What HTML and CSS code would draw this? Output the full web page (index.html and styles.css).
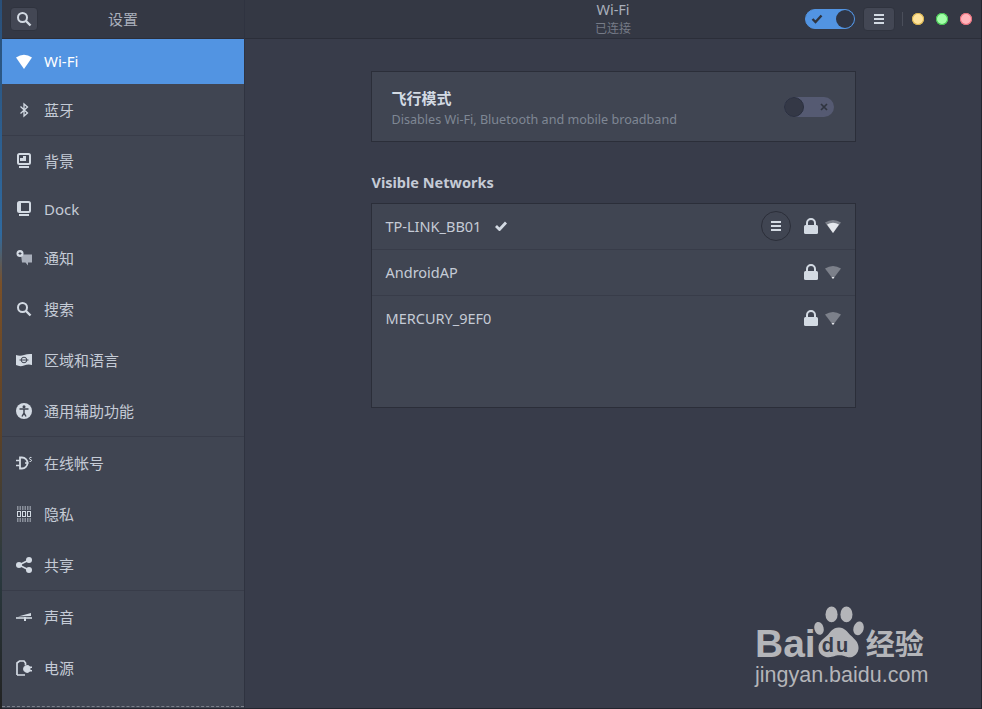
FILE: index.html
```html
<!DOCTYPE html>
<html lang="zh">
<head>
    <meta charset="UTF-8">
    <title>设置 - Wi-Fi</title>
    <link rel="stylesheet" href="styles.css">
</head>
<body>
    <div class="wallpaper"></div>
    <div class="window">
        <aside class="sidebar">
            <header class="side-head">
                <button class="head-btn">
                    <svg width="16" height="16" viewBox="0 0 16 16"><circle cx="6.5" cy="6.5" r="4.5" fill="none" stroke="#d3dae3" stroke-width="2"/><path d="M10 10l4.5 4.500" stroke="#d3dae3" stroke-width="2.400"/></svg>
                </button>
                <span class="side-title">设置</span>
            </header>
            <nav class="menu">
                <div class="menu-group">
                    <div class="row row-wifi active">
                        <svg class="icon" viewBox="0 0 16 16"><path d="M0 3.500Q8-2 16 3.500L8 15Z" fill="#fff"/></svg>
                        <span>Wi-Fi</span>
                    </div>
                    <div class="row">
                        <svg class="icon" viewBox="0 0 16 16"><path d="M4.500 4.500l7 6.500L8 14V2l3.500 3-7 6.500" fill="none" stroke="#d3dae3" stroke-width="1.300"/></svg>
                        <span>蓝牙</span>
                    </div>
                </div>
                <div class="menu-group">
                    <div class="row row-first">
                        <svg class="icon" viewBox="0 0 16 16"><rect x="2" y="1" width="12" height="10" rx="1.500" fill="none" stroke="#d3dae3" stroke-width="2"/><path d="M4 8V5h3V3h3v5z" fill="#d3dae3"/><rect x="3" y="13" width="10" height="2" fill="#d3dae3"/></svg>
                        <span>背景</span>
                    </div>
                    <div class="row row-short">
                        <svg class="icon" viewBox="0 0 16 16"><rect x="2" y="1" width="12" height="10" rx="1.500" fill="none" stroke="#d3dae3" stroke-width="2"/><rect x="3" y="2" width="2" height="8" fill="#d3dae3"/><rect x="3" y="13" width="10" height="2" fill="#d3dae3"/></svg>
                        <span>Dock</span>
                    </div>
                    <div class="row">
                        <svg class="icon" viewBox="0 0 16 16"><path d="M5 4.500h11v8h-4v3l-2.500-3H6z" fill="#a9afbb"/><circle cx="4" cy="3.500" r="3.500" fill="#d3dae3"/><path d="M2.500 3.500h3M4 2v3" stroke="#404552"/></svg>
                        <span>通知</span>
                    </div>
                    <div class="row">
                        <svg class="icon" viewBox="0 0 16 16"><circle cx="6.500" cy="6.500" r="4.500" fill="none" stroke="#d3dae3" stroke-width="2"/><path d="M10 10l4.500 4.500" stroke="#d3dae3" stroke-width="2.400"/></svg>
                        <span>搜索</span>
                    </div>
                    <div class="row">
                        <svg class="icon" viewBox="0 0 16 16"><path d="M0 3q4 1.500 8 0t8-1v11q-4-1-8 .5T0 13z" fill="#d3dae3"/><circle cx="8" cy="8" r="2.800" fill="none" stroke="#404552"/><path d="M3.500 8h9" stroke="#404552"/></svg>
                        <span>区域和语言</span>
                    </div>
                    <div class="row">
                        <svg class="icon" viewBox="0 0 16 16"><circle cx="8" cy="8" r="8" fill="#d3dae3"/><circle cx="8" cy="3.800" r="1.500" fill="#404552"/><path d="M3.500 6h9M8 6v4M8 10l-2 3.500M8 10l2 3.500" fill="none" stroke="#404552" stroke-width="1.500"/></svg>
                        <span>通用辅助功能</span>
                    </div>
                </div>
                <div class="menu-group">
                    <div class="row">
                        <svg class="icon" viewBox="0 0 16 16"><path d="M4 2.500h2a5.500 5.500 0 0 1 0 11H4z" fill="none" stroke="#d3dae3" stroke-width="1.800"/><path d="M0 5.500h4M0 10.500h4M12.500 8H9" stroke="#d3dae3" stroke-width="1.500"/><path d="M15.500 2.500q-2-.6-2 .8t1.500 1.500-.2 1.700h-1.300" fill="none" stroke="#d3dae3"/></svg>
                        <span>在线帐号</span>
                    </div>
                    <div class="row">
                        <svg class="icon" viewBox="0 0 16 16"><path d="M1 1h14M1 3h14M1 13h14M1 15h14" stroke="#d3dae3" stroke-dasharray="1.500 1" fill="none"/><rect x="1.500" y="5.500" width="3" height="5" fill="none" stroke="#d3dae3"/><rect x="6.500" y="5.500" width="3" height="5" fill="none" stroke="#d3dae3"/><rect x="11.500" y="5.500" width="3" height="5" fill="none" stroke="#d3dae3"/></svg>
                        <span>隐私</span>
                    </div>
                    <div class="row">
                        <svg class="icon" viewBox="0 0 16 16"><path d="M13 3L3 8l10 5" fill="none" stroke="#d3dae3" stroke-width="1.600"/><circle cx="13" cy="3" r="3" fill="#d3dae3"/><circle cx="3" cy="8" r="3" fill="#d3dae3"/><circle cx="13" cy="13" r="3" fill="#d3dae3"/></svg>
                        <span>共享</span>
                    </div>
                </div>
                <div class="menu-group menu-group-end">
                    <div class="row">
                        <svg class="icon" viewBox="0 0 16 16"><path d="M2 7.500l13-3.500V7z" fill="#d3dae3"/><path d="M0 9h16" stroke="#d3dae3" stroke-width="1.600"/><rect x="8" y="8" width="2" height="4" fill="#d3dae3"/></svg>
                        <span>声音</span>
                    </div>
                    <div class="row">
                        <svg class="icon" viewBox="0 0 16 16"><path d="M1 15V3l2.500-2H8l1.500 2v2.500M9 15H1" fill="none" stroke="#d3dae3" stroke-width="1.700"/><path d="M7 9a4 4 0 0 1 7-2.500h2V8h-1.500v2H16v1.500h-2A4 4 0 0 1 7 9z" fill="#d3dae3"/></svg>
                        <span>电源</span>
                    </div>
                </div>
            </nav>
        </aside>

        <section class="content">
            <header class="main-head">
                <div class="main-title">
                    <div class="title-text">Wi-Fi</div>
                    <div class="subtitle-text">已连接</div>
                </div>
                <div class="head-controls">
                    <div class="switch-on">
                        <svg width="12" height="10" viewBox="0 0 12 10"><path d="M1.500 5l3 3 6-6.500" fill="none" stroke="#2f343f" stroke-width="2.400"/></svg>
                        <span class="knob-on"></span>
                    </div>
                    <button class="head-btn menu-btn">
                        <span class="bars"><i></i><i></i><i></i></span>
                    </button>
                    <span class="head-sep"></span>
                    <span class="dot dot-min"></span>
                    <span class="dot dot-max"></span>
                    <span class="dot dot-close"></span>
                </div>
            </header>
            <main class="panel">
                <div class="card airplane">
                    <div>
                        <div class="airplane-title">飞行模式</div>
                        <div class="airplane-desc">Disables Wi-Fi, Bluetooth and mobile broadband</div>
                    </div>
                    <div class="switch-off">
                        <span class="knob-off"></span>
                        <svg width="8" height="8" viewBox="0 0 8 8"><path d="M1 1l6 6M7 1L1 7" stroke="#2f343f" stroke-width="1.700"/></svg>
                    </div>
                </div>
                <h3 class="section-title">Visible Networks</h3>
                <div class="card networks">
                    <div class="net">
                        <span class="net-name">TP-LINK_BB01</span>
                        <svg class="net-check" width="12" height="10" viewBox="0 0 12 10"><path d="M1 5l3.500 3.500L11 1.500" fill="none" stroke="#d3dae3" stroke-width="2.800"/></svg>
                        <span class="net-menu"><span class="bars"><i></i><i></i><i></i></span></span>
                        <svg class="lock" width="14" height="16" viewBox="0 0 14 16"><path d="M3 8V5a4 4 0 0 1 8 0v3" fill="none" stroke="#d3dae3" stroke-width="2"/><rect y="7" width="14" height="9" rx="1.500" fill="#d3dae3"/></svg>
                        <svg class="signal" width="16" height="14" viewBox="0 0 16 14"><path d="M0 3.500Q8-1.500 16 3.500L8 14Z" fill="#7c808a"/><path d="M2 5.500Q8 2 14 5.500L8 14Z" fill="#e4e7ec"/></svg>
                    </div>
                    <div class="net">
                        <span class="net-name">AndroidAP</span>
                        <svg class="lock" width="14" height="16" viewBox="0 0 14 16"><path d="M3 8V5a4 4 0 0 1 8 0v3" fill="none" stroke="#d3dae3" stroke-width="2"/><rect y="7" width="14" height="9" rx="1.500" fill="#d3dae3"/></svg>
                        <svg class="signal" width="16" height="14" viewBox="0 0 16 14"><path d="M0 3.500Q8-1.500 16 3.500L8 14Z" fill="#7c808a"/><path d="M6.500 12h3L8 14Z" fill="#e4e7ec"/></svg>
                    </div>
                    <div class="net">
                        <span class="net-name">MERCURY_9EF0</span>
                        <svg class="lock" width="14" height="16" viewBox="0 0 14 16"><path d="M3 8V5a4 4 0 0 1 8 0v3" fill="none" stroke="#d3dae3" stroke-width="2"/><rect y="7" width="14" height="9" rx="1.500" fill="#d3dae3"/></svg>
                        <svg class="signal" width="16" height="14" viewBox="0 0 16 14"><path d="M0 3.500Q8-1.500 16 3.500L8 14Z" fill="#7c808a"/><path d="M6.500 12h3L8 14Z" fill="#e4e7ec"/></svg>
                    </div>
                </div>
            </main>
        </section>
    </div>

    <!-- baidu watermark, sits over the panel -->
    <div class="watermark">
        <div class="wm-top">
            <span class="wm-bai">Bai</span>
            <span class="wm-paw">
                <svg width="54" height="54" viewBox="0 0 54 58">
                    <ellipse cx="5.500" cy="24" rx="5" ry="7" fill="#b4b5b9" transform="rotate(-15 5.500 24)"/>
                    <ellipse cx="19" cy="9" rx="6.500" ry="8.500" fill="#b4b5b9"/>
                    <ellipse cx="35" cy="9" rx="6.500" ry="8.500" fill="#b4b5b9"/>
                    <ellipse cx="48" cy="24" rx="5.500" ry="7.500" fill="#b4b5b9" transform="rotate(15 48 24)"/>
                    <path d="M27 23c6 0 9 5 13 9s8 7 8 13-6 11-11 10-6-2-10-2-6 2-11 2-11-3-11-10 5-9 9-13 6-9 13-9z" fill="#b4b5b9"/>
                </svg>
                <span class="wm-du">du</span>
            </span>
            <span class="wm-cn">经验</span>
        </div>
        <div class="wm-url">jingyan.baidu.com</div>
    </div>
</body>
</html>
```

FILE: styles.css
```css
* { box-sizing: border-box; }
html, body { height: 100%; }
body { margin: 0; display: flex; height: 709px; overflow: hidden; background-color: #2f343f; font-family: "Noto Sans", "Noto Sans CJK SC", sans-serif; font-size: 14px; color: #d3dae3; }
button { font: inherit; color: inherit; padding: 0; }

.wallpaper { width: 2px; background: linear-gradient(#2a4f78 0, #2f6aa0 33%, #7a5028 40%, #5e4226 60%, #2a3a40 80%, #222 100%); }
.window { flex: 1; display: flex; border-bottom: 1px solid #23262f; border-right: 1px solid #23262f; }

/* sidebar */
.sidebar { width: 243px; background-color: #404552; border-right: 1px solid #2f3340; display: flex; flex-direction: column; }
.side-head { height: 39px; flex-shrink: 0; display: flex; align-items: center; padding: 0 0 1px 8px; background-color: #343844; border-bottom: 1px solid #2b2e39; position: relative; }
.side-title { position: absolute; left: 106px; top: 10px; font-size: 15px; line-height: 18px; color: #a9afbb; }
.head-btn { width: 28px; height: 24px; display: flex; align-items: center; justify-content: center; background-color: #434754; border: 1px solid #2f333e; border-radius: 4px; }
.menu { flex: 1; display: flex; flex-direction: column; }
.menu-group { border-bottom: 1px solid #383c49; }
.menu-group-end { flex: 1; border-bottom: 0; position: relative; }
.menu-group-end::after { content: ""; position: absolute; left: 0; right: 0; bottom: 1px; border-bottom: 1px dashed #7c808a; }
.row { height: 51px; display: flex; align-items: center; padding-left: 14px; gap: 12px; font-size: 15px; color: #c5cbd6; }
.row span { margin-top: -1px; }
.row-first { height: 50px; }
.row-short { height: 46px; }
.row-wifi { height: 45px; }
.active { background-color: #5294e2; color: #fff; }
.icon { width: 16px; height: 16px; flex-shrink: 0; }

/* right side */
.content { flex: 1; display: flex; flex-direction: column; background-color: #383c4a; }
.main-head { height: 39px; flex-shrink: 0; display: flex; align-items: center; justify-content: center; background-color: #343844; border-bottom: 1px solid #2b2e39; position: relative; }
.main-title { text-align: center; margin-top: -1px; }
.title-text { font-size: 14.5px; line-height: 18px; margin-bottom: 2px; color: #a9afbb; }
.subtitle-text { font-size: 12px; line-height: 17px; color: #767b87; }
.head-controls { position: absolute; right: 9px; top: 7px; display: flex; align-items: center; height: 24px; }
.switch-on { width: 50px; height: 20px; display: flex; align-items: center; justify-content: space-between; padding-left: 5px; background-color: #5294e2; border-radius: 10px; border: 1px solid #5294e2; }
.knob-on { width: 18px; height: 18px; border-radius: 50%; background-color: #2f3544; }
.menu-btn { width: 32px; margin-left: 8px; }
.bars { display: flex; flex-direction: column; gap: 2px; width: 10px; }
.bars i { display: block; height: 2px; background-color: #d3dae3; }
.head-sep { width: 1px; height: 14px; background-color: #4a4e5a; margin: 0 9px 0 7px; }
.dot { width: 12px; height: 12px; border-radius: 50%; margin-right: 12px; }
.dot:last-child { margin-right: 0; }
.dot-min { background-color: #ffe39b; box-shadow: 0 0 0 1px #d8b24a inset; }
.dot-max { background-color: #a2ffa8; box-shadow: 0 0 0 1px #3fc24c inset; }
.dot-close { background-color: #ffb3ba; box-shadow: 0 0 0 1px #e86a78 inset; }

.panel { flex: 1; display: flex; flex-direction: column; align-items: center; padding-top: 32px; }
.card { width: 485px; background-color: #404552; border: 1px solid #2b2e39; }
.airplane { height: 71px; display: flex; align-items: center; justify-content: space-between; padding: 5px 21px 0 20px; }
.airplane-title { font-size: 15px; line-height: 18px; font-weight: 700; color: #d3dae3; }
.airplane-desc { font-size: 12.6px; line-height: 18px; color: #7f8794; margin-top: 4px; }
.switch-off { width: 50px; height: 20px; margin-top: -5px; display: flex; align-items: center; justify-content: space-between; padding-right: 6px; background-color: #555a72; border-radius: 10px; }
.knob-off { width: 20px; height: 20px; border-radius: 50%; background-color: #343846; border: 1px solid #2b3040; }
.section-title { width: 485px; margin: 31px 0 12px; padding-left: 1px; font-size: 14.5px; line-height: 18px; font-weight: 700; color: #c5cbd6; }
.networks { height: 205px; }
.net { height: 46px; display: flex; align-items: center; padding: 0 14px 1px; border-bottom: 1px solid #383c49; }
.net:last-child { height: 45px; border-bottom: 0; }
.net-name { font-size: 14.5px; color: #c5cbd6; }
.net-check { margin-left: 14px; }
.net-menu { width: 30px; height: 30px; margin-left: auto; margin-right: 13px; display: flex; align-items: center; justify-content: center; border: 1px solid #2b2e39; border-radius: 50%; }
.lock { margin-left: auto; }
.net-menu + .lock { margin-left: 0; }
.signal { margin-left: 7px; }

.watermark { position: absolute; left: 755px; top: 604px; width: 178px; color: #b4b5b9; font-family: "Liberation Sans", "Noto Sans CJK SC", sans-serif; }
.wm-top { display: flex; align-items: flex-end; height: 56px; }
.wm-bai { font-size: 39px; line-height: 38px; font-weight: 700; margin: 0 -4px -3px 0; }
.wm-paw { position: relative; width: 54px; height: 54px; flex-shrink: 0; }
.wm-du { position: absolute; left: 10px; top: 30px; font-size: 20px; line-height: 18px; font-weight: 700; letter-spacing: 2px; color: #383c4a; }
.wm-cn { font-size: 29px; line-height: 36px; font-weight: 700; white-space: nowrap; margin-bottom: -3px; }
.wm-url { font-size: 21.5px; line-height: 24px; margin-top: 3px; white-space: nowrap; }
```
